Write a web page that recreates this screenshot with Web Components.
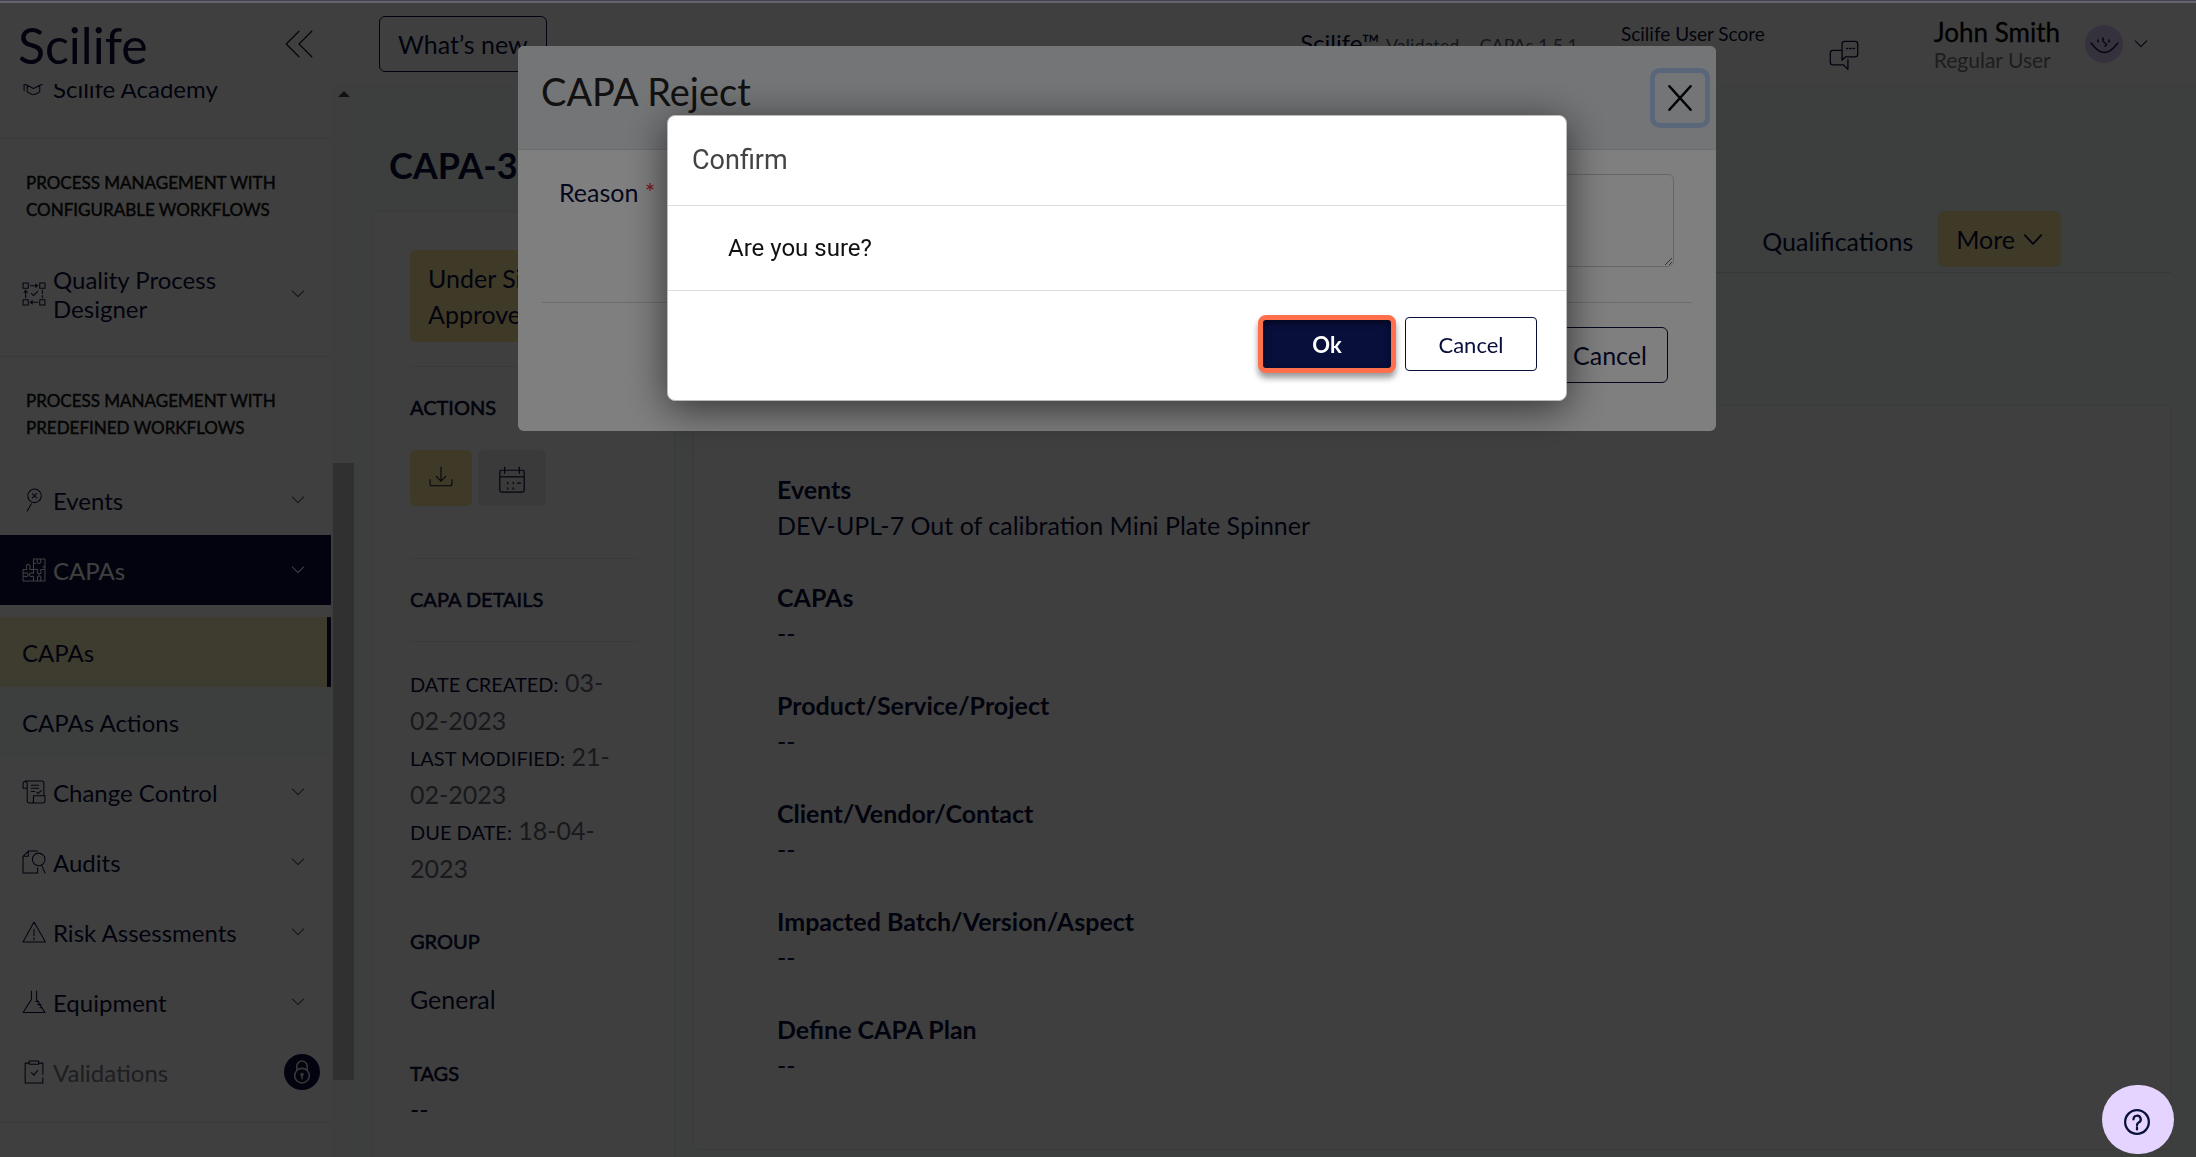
<!DOCTYPE html>
<html lang="en">
<head>
<meta charset="utf-8">
<title>Scilife - CAPA</title>
<style>
    :root {
        --navy: #080f3b;
        --yellow: #fce49c;
        --mint: #f1fcf8;
        --line: #e6e8ea;
    }

    body {
        margin: 0;
        height: 100vh;
        overflow: hidden;
        font-family: Lato, "Open Sans", sans-serif;
        font-size: 25px;
        font-weight: 400;
        line-height: 36px;
        color: var(--navy);
        background: #fff;
    }
</style>
</head>
<body>
<app-shell>
    <app-header slot="header"></app-header>
    <side-nav slot="nav">
        <nav-item icon="academy">Scilife Academy</nav-item>
        <nav-section heading="Process management with configurable workflows">
            <nav-item icon="process" arrow>Quality Process Designer</nav-item>
        </nav-section>
        <nav-section heading="Process management with predefined workflows">
            <nav-item icon="events" arrow>Events</nav-item>
            <nav-item icon="puzzle" arrow active>CAPAs</nav-item>
            <nav-sub>
                <nav-item current>CAPAs</nav-item>
                <nav-item>CAPAs Actions</nav-item>
            </nav-sub>
            <nav-item icon="scroll" arrow>Change Control</nav-item>
            <nav-item icon="audit" arrow>Audits</nav-item>
            <nav-item icon="risk" arrow>Risk Assessments</nav-item>
            <nav-item icon="flask" arrow>Equipment</nav-item>
            <nav-item icon="clipboard" locked>Validations</nav-item>
        </nav-section>
        <nav-section></nav-section>
    </side-nav>
    <capa-summary></capa-summary>
    <capa-links>
        <field-item label="Events">DEV-UPL-7 Out of calibration Mini Plate Spinner</field-item>
        <field-item label="CAPAs">--</field-item>
        <field-item label="Product/Service/Project">--</field-item>
        <field-item label="Client/Vendor/Contact">--</field-item>
        <field-item label="Impacted Batch/Version/Aspect">--</field-item>
        <field-item label="Define CAPA Plan">--</field-item>
    </capa-links>
</app-shell>
<modal-layer top="46">
    <reject-form></reject-form>
</modal-layer>
<modal-layer top="115">
    <confirm-box heading="Confirm">Are you sure?</confirm-box>
</modal-layer>
<help-button></help-button>

<script>
const icons = {
    academy: '<path d="M1 7 11 2 21 7 11 12zM2 8v6M5 9v6q6 6 12 0V9"/>',
    process: '<path d="M1 1h5v5H1zM17 1h5v5h-5zM1 17h5v5H1zM17 17h5v5h-5zM8 3.500h7M13 2l2 1.500-2 1.500M8 19.500h7M10 18l-2 1.500 2 1.500M3.500 8v7M2 10l1.500-2L5 10M19.500 8v3M19.500 13v2M9 11l2 2 4-4"/>',
    events: '<circle cx="12" cy="7.500" r="6.500"/><path d="M10 5.500l4 4M14 5.500l-4 4M9 15l-4 7"/>',
    puzzle: '<path d="M11 1h11v21H1V11h3.500V9.500a2 2 0 1 1 3 0V11H11V1M11 11v3.500h-1a1.800 1.800 0 1 0 0 3h1V22M1 14.500h2a1.800 1.800 0 1 1 0 3H1M14.500 1v2a1.800 1.800 0 1 0 3.500 0V1M11 5h2M20 8.500h2M11 11h4v1.500a1.800 1.800 0 1 0 3 0V11h4M15 22v-2a1.800 1.800 0 1 1 3 0v2"/>',
    scroll: '<path d="M5 8H1V3.500A2 2 0 0 1 5 3.500V20q0 2 2 2h13q2 0 2-2v-5H11v5q0 2-2 2M3 1h16q2 0 2 2v12M9 5h7M9 8h7M9 11h3M14 11.500l1.500 1.500 3-3"/>',
    audit: '<path d="M15 22H1V6l5-5h9M1 6h5V1M15 17v5M19 15l3 7"/><circle cx="16" cy="9" r="6"/>',
    risk: '<path d="M11.500 2 22.500 21H1zM11.500 9v6M11.500 17v2"/>',
    flask: '<path d="M9 1v8L1 21.500h21L14 9V1M13 11h3M15 14h3M17 17h2"/>',
    clipboard: '<path d="M7 3H3v19h17V17M20 14V3h-4M7 1h9v3H7zM9 12l2.500 2.500L15 10"/>',
    lock: '<circle cx="11.500" cy="15" r="7"/><path d="M6.500 10V6a5 5 0 0 1 10 0v4M11.500 14v4"/><circle cx="11.500" cy="14" r="1"/>',
    down: '<path d="M6 8.500l5.500 5.500L17 8.500"/>',
    more: '<path d="M2 7l9.500 10L21 7"/>',
    collapse: '<path d="M11.500 1 1 11.500 11.500 22M22 1 11.500 11.500 22 22"/>',
    download: '<path d="M11.500 1v13M7 10l4.500 4.500L16 10M1 13v4q0 2 2 2h17q2 0 2-2v-4"/>',
    calendar: '<path d="M3 3.500h17q1.500 0 1.500 1.500v15q0 1.500-1.500 1.500H3q-1.500 0-1.500-1.500V5q0-1.500 1.500-1.500zM1.500 9h20M5.500 1v5M17.500 1v5M8 13.500v1M12.500 13.500v1M16 14h2.500M8 18v1M12.500 18v1"/>',
    chat: '<path d="M9 8H3Q1 8 1 10v7q0 2 2 2h8l3.500 3.500V15M10 15.500V3q0-2 2-2h8q2 0 2 2v8q0 2-2 2h-7.500zM13.500 6.500h1M16 6.500h1M18.500 6.500h1"/>',
    close: '<path d="M2 1l19 21M21 1 2 22"/>',
    help: '<circle cx="11.500" cy="11.500" r="10.500"/><path d="M8.400 9.200a3.200 3.200 0 1 1 4.600 2.800q-1.500.800-1.500 2.300M11.500 16.300v1.800"/>'
} ;

class BaseElement extends HTMLElement {
    connectedCallback() {
        if (!this.shadowRoot) {
            this.attachShadow({mode: 'open'}) ;
            this.shadowRoot.innerHTML = this.render() ;
        }
    }
}

class SvgIcon extends BaseElement {
    render() {
        const size = this.getAttribute('size') || 24 ;
        return `
            <style>
                :host { display: block; flex: none; }
                svg { display: block; overflow: visible; }
            </style>
            <svg width="${size}" height="${size}" viewBox="0 0 23 23" fill="none" stroke="currentColor"
                stroke-width="${this.getAttribute('stroke') || 1}" stroke-linecap="round" stroke-linejoin="round" aria-hidden="true">
                ${icons[this.getAttribute('name')]}
            </svg>
        ` ;
    }
}

class AppShell extends BaseElement {
    render() {
        return `
            <style>
                :host {
                    display: grid;
                    grid-template: 84px minmax(0, 1fr) / 356px minmax(0, 1fr);
                    height: 100vh;
                }
                .header { grid-column: 1 / -1; }
                main {
                    box-sizing: border-box;
                    display: grid;
                    grid-template-columns: 303px minmax(0, 1fr);
                    gap: 18px;
                    padding: 0 25px 7px 16px;
                    background: var(--mint);
                    overflow: hidden;
                }
                .strip {
                    position: fixed;
                    z-index: 20;
                    inset: 0 0 auto;
                    height: 2px;
                    border-top: 1px solid #45444f;
                    background: #65636d;
                }
            </style>
            <div class="strip"></div>
            <div class="header"><slot name="header"></slot></div>
            <slot name="nav"></slot>
            <main><slot></slot></main>
        ` ;
    }
}

class AppHeader extends BaseElement {
    render() {
        return `
            <style>
                :host {
                    display: flex;
                    align-items: center;
                    box-sizing: border-box;
                    height: 84px;
                    padding: 4px 43px 0 18px;
                }
                button { padding: 0; border: 0; background: none; color: inherit; font: inherit; }
                .logo { flex: none; width: 267px; padding-top: 2px; font-size: 50px; font-weight: 400; line-height: 60px; color: var(--navy); text-decoration: none; }
                .collapse { margin-right: 66px; color: #111; }
                .news { height: 56px; padding: 0 18px; border: 1px solid var(--navy); border-radius: 6px; margin-right: auto; }
                .version { margin-right: 43px; font-size: 24px; white-space: nowrap; }
                small { font-size: 18px; color: #5b5f6b; }
                .validated { margin-right: 14px; }
                .score { align-self: flex-start; margin: 12px 64px 0 0; font-size: 19px; font-weight: 400; }
                .chat { margin: 22px 75px 0 0; }
                .user { margin: 4px 25px 0 0; line-height: 28px; color: #777; font-size: 21px; }
                strong { display: block; font-size: 26px; font-weight: 400; color: #000; -webkit-text-stroke: 0.3px; }
                .account { display: flex; align-items: center; gap: 6px; }
            </style>
            <a class="logo" href="#">Scilife</a>
            <button class="collapse" aria-label="Collapse menu"><svg-icon name="collapse" size="28"></svg-icon></button>
            <button class="news">What’s new</button>
            <div class="version">Scilife™ <small class="validated">Validated</small> <small>CAPAs 1.5.1</small></div>
            <div class="score">Scilife User Score</div>
            <button class="chat" aria-label="Messages"><svg-icon name="chat" size="30"></svg-icon></button>
            <div class="user"><strong>John Smith</strong>Regular User</div>
            <button class="account" aria-label="Account menu">
                <svg width="38" height="38" viewBox="0 0 38 38" fill="none" stroke="#1c1440" stroke-width="1.500" stroke-linecap="round">
                    <circle cx="19" cy="19" r="19" fill="#d8c8f4" stroke="none"/>
                    <path d="M7 19q12 17 25 0M6 18l2 2M33 18l-2 2M18 13q-1 3 2 5t0 3M13 15v2M24 15v2"/>
                </svg>
                <svg-icon name="down"></svg-icon>
            </button>
        ` ;
    }
}

class SideNav extends BaseElement {
    render() {
        return `
            <style>
                :host { display: flex; min-height: 0; overflow: hidden; }
                nav { flex: 1; overflow: hidden; }
                .list { margin-top: -31px; }
                .track { display: flex; flex-direction: column; width: 21px; padding: 0 2px; background: #f8f8f8; }
                .arrow { margin: 7px auto 0; border: 6px solid transparent; border-top: 0; border-bottom-color: #444; }
                .before { flex: 366; }
                .thumb { flex: 617; background: #c1c1c1; }
                .after { flex: 77; }
            </style>
            <nav><div class="list"><slot></slot></div></nav>
            <div class="track">
                <div class="arrow"></div>
                <div class="before"></div>
                <div class="thumb"></div>
                <div class="after"></div>
            </div>
        ` ;
    }
}

class NavSection extends BaseElement {
    render() {
        const heading = this.getAttribute('heading') ;
        return `
            <style>
                :host { display: block; margin-top: 15px; border-top: 1px solid var(--line); }
                h2 {
                    margin: 30px 40px 24px 26px;
                    font-size: 17px;
                    font-weight: 400;
                    line-height: 27px;
                    text-transform: uppercase;
                    color: #111;
                    -webkit-text-stroke: 0.5px;
                }
            </style>
            ${heading ? `<h2>${heading}</h2>` : ''}
            <slot></slot>
        ` ;
    }
}

class NavSub extends BaseElement {
    render() {
        return `
            <style>
                :host { display: block; margin-top: 12px; background: var(--mint); }
            </style>
            <slot></slot>
        ` ;
    }
}

class NavItem extends BaseElement {
    render() {
        const icon = this.getAttribute('icon') ;
        return `
            <style>
                :host { display: block; }
                a {
                    display: flex;
                    align-items: center;
                    gap: 7px;
                    box-sizing: border-box;
                    min-height: 70px;
                    padding: 18px 21px 18px 22px;
                    font-size: 24px;
                    line-height: 29px;
                    color: inherit;
                    text-decoration: none;
                }
                .text { flex: 1; }
                .arrow { color: #555; }
                .lock { display: grid; place-items: center; width: 36px; height: 36px; margin: -1px -10px -1px 0; border-radius: 50%; background: var(--navy); color: #ddd; }
                :host([active]) a { background: var(--navy); color: #fff; }
                :host([active]) .arrow { color: #fff; }
                :host([current]) a { background: #f8eebc; border-right: 4px solid var(--navy); }
                :host([locked]) .text { color: #778; }
            </style>
            <a href="#">
                ${icon ? `<svg-icon name="${icon}"></svg-icon>` : ''}
                <span class="text"><slot></slot></span>
                ${this.hasAttribute('arrow') ? '<svg-icon class="arrow" name="down"></svg-icon>' : ''}
                ${this.hasAttribute('locked') ? '<span class="lock"><svg-icon name="lock" stroke="1.5"></svg-icon></span>' : ''}
            </a>
        ` ;
    }
}

class CapaSummary extends BaseElement {
    render() {
        return `
            <style>
                :host { display: block; min-height: 0; }
                h1 { margin: 0 0 0 17px; padding: 57px 0 22px; font-size: 36px; font-weight: 700; line-height: 48px; white-space: nowrap; }
                .card {
                    box-sizing: border-box;
                    height: 1100px;
                    padding: 38px 38px 38px 37px;
                    border: 1px solid var(--line);
                    border-radius: 6px;
                    background: #fff;
                }
                .status { padding: 10px 18px; border-radius: 6px; background: var(--yellow); }
                hr { margin: 24px 0 22px; border: 0; border-top: 1px solid var(--line); }
                h2 { margin: 0; font-size: 20px; font-weight: 400; line-height: 36px; text-transform: uppercase; -webkit-text-stroke: 0.6px; }
                .actions { display: flex; gap: 6px; margin: 25px 0 52px; }
                button { display: grid; place-items: center; width: 68px; height: 56px; padding: 4px 0 0; border: 0; border-radius: 6px; background: #e8e8ec; color: inherit; }
                .download { width: 62px; padding: 0; background: var(--yellow); }
                dl { margin: 0 0 37px; }
                dt, dd { display: inline; margin: 0; }
                dt { font-size: 20px; text-transform: uppercase; }
                dd { color: #667; }
                p { margin: 22px 0 38px; }
                .tags { margin: 0; }
            </style>
            <h1>CAPA-3</h1>
            <div class="card">
                <div class="status">Under Signature<br>Approver</div>
                <hr>
                <h2>Actions</h2>
                <div class="actions">
                    <button class="download" aria-label="Download"><svg-icon name="download"></svg-icon></button>
                    <button aria-label="Calendar"><svg-icon name="calendar" size="28"></svg-icon></button>
                </div>
                <hr>
                <h2>CAPA details</h2>
                <hr>
                <dl>
                    <div><dt>Date created:</dt> <dd>03-<wbr>02-2023</dd></div>
                    <div><dt>Last modified:</dt> <dd>21-<wbr>02-2023</dd></div>
                    <div><dt>Due date:</dt> <dd>18-04-<wbr>2023</dd></div>
                </dl>
                <h2>Group</h2>
                <p>General</p>
                <h2>Tags</h2>
                <p class="tags">--</p>
            </div>
        ` ;
    }
}

class CapaLinks extends BaseElement {
    render() {
        return `
            <style>
                :host { display: flex; flex-direction: column; min-height: 0; padding-top: 127px; }
                nav {
                    display: flex;
                    justify-content: flex-end;
                    gap: 25px;
                    height: 61px;
                    padding-right: 110px;
                    border-bottom: 1px solid #dcdfe0;
                    margin-bottom: 132px;
                }
                a { line-height: 61px; color: inherit; text-decoration: none; }
                button { display: flex; align-items: center; gap: 8px; height: 56px; padding: 0 18px; border: 0; border-radius: 6px; background: var(--yellow); color: inherit; font: inherit; }
                section {
                    display: flex;
                    flex-direction: column;
                    gap: 36px;
                    flex: 1;
                    padding: 65px 83px 0;
                    border: 1px solid var(--line);
                    border-radius: 6px;
                    background: #fff;
                }
            </style>
            <nav>
                <a href="#">Qualifications</a>
                <button>More <svg-icon name="more" size="20" stroke="2"></svg-icon></button>
            </nav>
            <section><slot></slot></section>
        ` ;
    }
}

class FieldItem extends BaseElement {
    render() {
        return `
            <style>
                :host { display: block; }
                h3 { margin: 0; font-size: 25px; font-weight: 700; }
            </style>
            <h3>${this.getAttribute('label')}</h3>
            <slot></slot>
        ` ;
    }
}

class ModalLayer extends BaseElement {
    render() {
        return `
            <style>
                :host {
                    position: fixed;
                    inset: 0;
                    z-index: 10;
                    display: flex;
                    justify-content: center;
                    align-items: flex-start;
                    padding: ${this.getAttribute('top')}px 0 0 38px;
                    background: rgba(0, 0, 0, 0.5);
                }
            </style>
            <slot></slot>
        ` ;
    }
}

class RejectForm extends BaseElement {
    render() {
        return `
            <style>
                :host {
                    display: block;
                    box-sizing: border-box;
                    width: 100%;
                    max-width: 1198px;
                    border-radius: 6px;
                    background: #fff;
                    overflow: hidden;
                }
                header {
                    display: flex;
                    justify-content: space-between;
                    padding: 22px 6px 21px 23px;
                    border-bottom: 1px solid #d8dade;
                    background: #e8eaee;
                }
                h2 { margin: 0; font-size: 38px; font-weight: 400; line-height: 46px; color: #222; }
                button { font: inherit; color: inherit; background: none; }
                .close { display: grid; place-items: center; width: 60px; height: 60px; padding: 0; border: 5px solid #b5cdf5; border-radius: 10px; color: #000; }
                .field { display: flex; gap: 60px; margin: 0 42px 0 41px; padding: 24px 0 35px; }
                label { line-height: 36px; }
                i { font-style: normal; color: #f33; }
                textarea { box-sizing: border-box; flex: 1; height: 93px; border: 1px solid #ccc; border-radius: 6px; font: inherit; }
                footer { display: flex; justify-content: flex-end; margin: 0 24px; padding: 24px 24px 48px; border-top: 1px solid #d8dade; }
                footer button { width: 116px; height: 56px; padding: 0; border: 1px solid var(--navy); border-radius: 6px; }
            </style>
            <header>
                <h2>CAPA Reject</h2>
                <button class="close" aria-label="Close"><svg-icon name="close" size="26" stroke="2"></svg-icon></button>
            </header>
            <div class="field">
                <label for="reason">Reason <i>*</i></label>
                <textarea id="reason"></textarea>
            </div>
            <footer><button>Cancel</button></footer>
        ` ;
    }
}

class ConfirmBox extends BaseElement {
    render() {
        return `
            <style>
                :host {
                    display: block;
                    box-sizing: border-box;
                    width: 100%;
                    max-width: 900px;
                    border: 1px solid #bbb;
                    border-radius: 8px;
                    background: #fff;
                    box-shadow: 0 8px 40px rgba(0, 0, 0, 0.6);
                    font-family: Roboto, sans-serif;
                    font-size: 24px;
                    color: #111;
                    font-weight: 400;
                }
                h2 { margin: 0; padding: 24px; font-size: 27px; font-weight: 400; line-height: 41px; color: #444; }
                p { margin: 0; padding: 24px 60px; border: solid #ddd; border-width: 1px 0; }
                footer { display: flex; align-items: center; justify-content: flex-end; gap: 9px; padding: 24px 29px 27px; }
                button { box-sizing: border-box; width: 132px; height: 54px; border: 1px solid var(--navy); border-radius: 4px; background: #fff; color: var(--navy); font: 400 22px Lato, sans-serif; }
                .ok { width: 138px; height: 58px; border: 5px solid #ff6f4b; border-radius: 8px; background: var(--navy); color: #fff; font-weight: 700; box-shadow: 0 5px 6px rgba(0, 0, 0, 0.4), inset 0 3px 6px rgba(0, 0, 0, 0.5); }
            </style>
            <h2>${this.getAttribute('heading')}</h2>
            <p><slot></slot></p>
            <footer>
                <button class="ok">Ok</button>
                <button>Cancel</button>
            </footer>
        ` ;
    }
}

class HelpButton extends BaseElement {
    render() {
        return `
            <style>
                :host { position: fixed; right: 22px; bottom: 3px; z-index: 20; }
                button { display: grid; place-items: center; width: 72px; height: 69px; padding: 5px 2px 0 0; border: 0; border-radius: 36px; background: #e4d4ff; color: var(--navy); }
            </style>
            <button aria-label="Help"><svg-icon name="help" size="26" stroke="2"></svg-icon></button>
        ` ;
    }
}

customElements.define('svg-icon', SvgIcon) ;
customElements.define('app-shell', AppShell) ;
customElements.define('app-header', AppHeader) ;
customElements.define('side-nav', SideNav) ;
customElements.define('nav-section', NavSection) ;
customElements.define('nav-sub', NavSub) ;
customElements.define('nav-item', NavItem) ;
customElements.define('capa-summary', CapaSummary) ;
customElements.define('capa-links', CapaLinks) ;
customElements.define('field-item', FieldItem) ;
customElements.define('modal-layer', ModalLayer) ;
customElements.define('reject-form', RejectForm) ;
customElements.define('confirm-box', ConfirmBox) ;
customElements.define('help-button', HelpButton) ;
</script>
</body>
</html>
